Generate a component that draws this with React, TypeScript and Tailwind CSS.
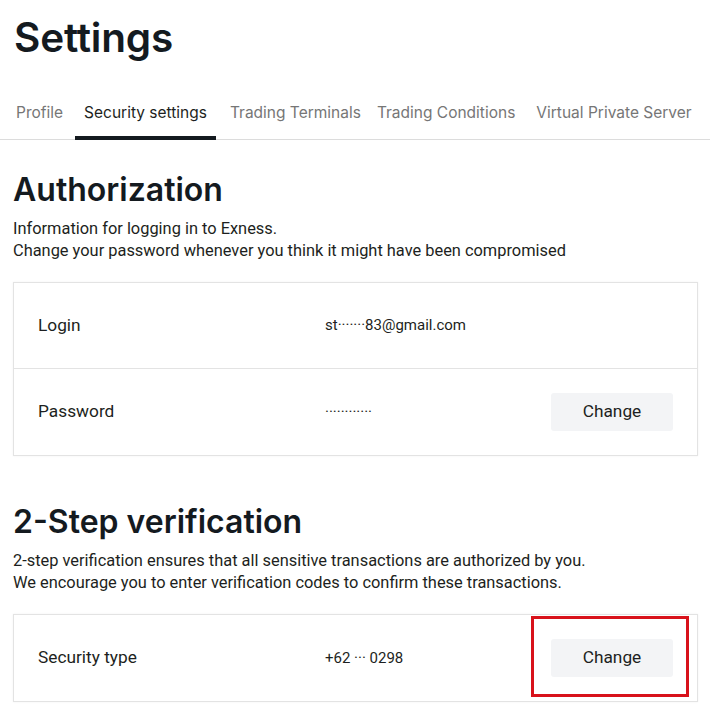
import React from "react";

const heading = { fontFamily: "Inter, 'Noto Sans', sans-serif" };

function Row({ label, value, button, highlight, tall }: { label: string; value: string; button?: boolean; highlight?: boolean; tall?: boolean }) {
  return (
    <div className={tall ? "flex items-center h-[86px] pl-[24px] pr-[24px]" : "flex items-center h-[85px] pl-[24px] pr-[24px]"}>
      <div className="w-[287px] text-[17.3px] text-[#1d1f21]">{label}</div>
      <div className="flex-1 text-[15px] text-[#1d1f21]">{value}</div>
      {button && (
        <div className="relative">
          <button className="w-[122px] h-[38px] rounded-[3px] bg-[#f3f4f6] text-[17.3px] text-[#1d1f21]">Change</button>
          {highlight && (
            <div className="absolute left-[-20px] top-[-23px] w-[158px] h-[81px] border-[3px] border-[#d8121b] pointer-events-none" />
          )}
        </div>
      )}
    </div>
  );
}

export default function App() {
  return (
    <div className="w-[710px] h-[720px] bg-white overflow-hidden" style={{ fontFamily: "Roboto, 'Liberation Sans', sans-serif" }}>
      <div className="px-[14px] pt-[14px]">
        <h1 className="text-[40.5px] font-semibold leading-[48px] text-[#141a1f] tracking-[-0.2px]" style={heading}>Settings</h1>
      </div>
      <div className="mt-[41px] border-b border-[#dcdcdc] flex whitespace-nowrap text-[15.5px] leading-[20px] text-[#767676] pl-[6px]" style={heading}>
        <div className="px-[10px] pb-[16px]">Profile</div>
        <div className="relative px-[9px] pb-[16px] ml-[2px] text-[#1d1f21]">
          Security settings
          <div className="absolute left-0 right-0 bottom-[-1px] h-[4px] bg-[#141a1f]" />
        </div>
        <div className="px-[13px] pb-[16px] ml-[1px]">Trading Terminals</div>
        <div className="px-[3px] pb-[16px]">Trading Conditions</div>
        <div className="px-[10px] pb-[16px] ml-[8px]">Virtual Private Server</div>
      </div>

      <div className="pl-[13px] pr-[12px]">
        <h2 className="mt-[31px] text-[32px] font-semibold leading-[38px] text-[#141a1f]" style={heading}>Authorization</h2>
        <p className="mt-[9px] text-[16.4px] leading-[22px] text-[#1d1f21]">
          Information for logging in to Exness.
          <br />
          Change your password whenever you think it might have been compromised
        </p>
        <div className="mt-[20px] border border-[#e3e3e3] shadow-[0_0_2px_rgba(0,0,0,0.06)]">
          <Row label="Login" value="st·······83@gmail.com" />
          <div className="border-t border-[#e3e3e3]" />
          <Row label="Password" value="············" button tall />
        </div>

        <h2 className="mt-[47px] text-[32px] font-semibold leading-[38px] text-[#141a1f]" style={heading}>2-Step verification</h2>
        <p className="mt-[9px] text-[16.4px] leading-[22px] text-[#1d1f21]">
          2-step verification ensures that all sensitive transactions are authorized by you.
          <br />
          We encourage you to enter verification codes to confirm these transactions.
        </p>
        <div className="mt-[20px] border border-[#e3e3e3] shadow-[0_0_2px_rgba(0,0,0,0.06)]">
          <Row label="Security type" value="+62 ··· 0298" button highlight tall />
        </div>
      </div>
    </div>
  );
}
